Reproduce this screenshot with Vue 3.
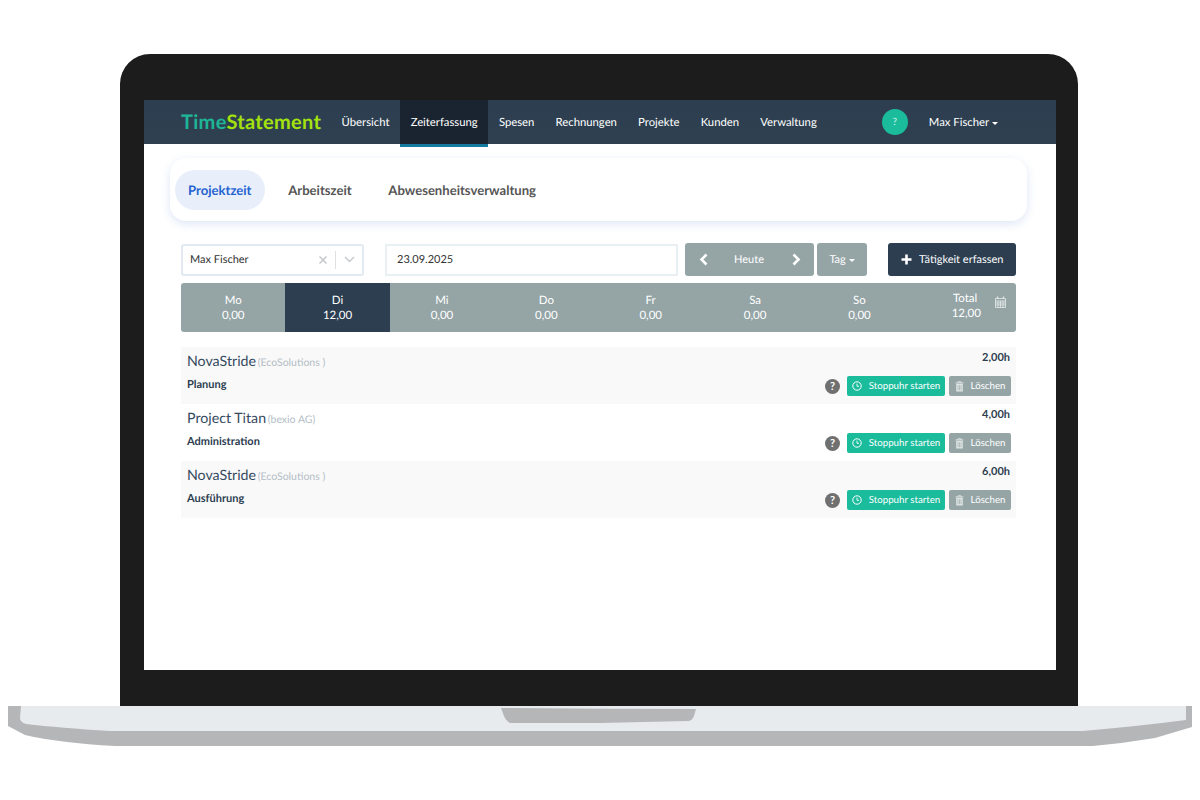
<script setup>
const nav = ['Übersicht', 'Zeiterfassung', 'Spesen', 'Rechnungen', 'Projekte', 'Kunden', 'Verwaltung']
const tabs = ['Projektzeit', 'Arbeitszeit', 'Abwesenheitsverwaltung']
const days = [
  { d: 'Mo', v: '0,00' },
  { d: 'Di', v: '12,00', active: true },
  { d: 'Mi', v: '0,00' },
  { d: 'Do', v: '0,00' },
  { d: 'Fr', v: '0,00' },
  { d: 'Sa', v: '0,00' },
  { d: 'So', v: '0,00' }
]
const rows = [
  { title: 'NovaStride', client: '(EcoSolutions )', task: 'Planung', hours: '2,00h' },
  { title: 'Project Titan', client: '(bexio AG)', task: 'Administration', hours: '4,00h' },
  { title: 'NovaStride', client: '(EcoSolutions )', task: 'Ausführung', hours: '6,00h' }
]
</script>

<template>
  <div class="page">
    <div class="lid">
      <div class="screen">
        <header class="navbar">
          <div class="logo"><span class="logo-a">Time</span><span class="logo-b">Statement</span></div>
          <nav class="nav">
            <a v-for="(n, i) in nav" :key="n" class="nav-item" :class="{ active: i === 1 }">{{ n }}</a>
          </nav>
          <div class="help">?</div>
          <div class="user">Max Fischer <span class="caret"></span></div>
        </header>

        <div class="tabs">
          <div v-for="(t, i) in tabs" :key="t" class="tab" :class="{ on: i === 0 }">{{ t }}</div>
        </div>

        <div class="content">
          <div class="toolbar">
            <div class="select">
              <span class="select-val">Max Fischer</span>
              <svg class="sel-x" width="10" height="10" viewBox="0 0 10 10"><path d="M1.5 1.5l7 7M8.5 1.5l-7 7" stroke="#c4c8cc" stroke-width="1.5" fill="none"/></svg>
              <span class="sel-sep"></span>
              <svg class="sel-d" width="11" height="7" viewBox="0 0 11 7"><path d="M1 1l4.5 4.5L10 1" stroke="#c4c8cc" stroke-width="1.4" fill="none"/></svg>
            </div>
            <div class="date">23.09.2025</div>
            <div class="group">
              <svg width="10" height="13" viewBox="0 0 10 13"><path d="M7.5 1.5L2.5 6.5l5 5" stroke="#fff" stroke-width="2.6" fill="none"/></svg>
              <span class="today">Heute</span>
              <svg width="10" height="13" viewBox="0 0 10 13"><path d="M2.5 1.5l5 5-5 5" stroke="#fff" stroke-width="2.6" fill="none"/></svg>
            </div>
            <div class="tag">Tag <span class="caret small"></span></div>
            <div class="add">
              <svg width="11" height="11" viewBox="0 0 11 11"><path d="M5.5 0.5v10M0.5 5.5h10" stroke="#fff" stroke-width="2.6" fill="none"/></svg>
              <span>Tätigkeit erfassen</span>
            </div>
          </div>

          <div class="week">
            <div v-for="d in days" :key="d.d" class="day" :class="{ active: d.active }">
              <div>{{ d.d }}</div>
              <div>{{ d.v }}</div>
            </div>
            <div class="day total">
              <div class="total-text">
                <div>Total</div>
                <div>12,00</div>
              </div>
              <svg class="cal" width="11" height="12" viewBox="0 0 11 12">
                <path d="M0.5 2.5h10v9h-10zM0.5 5h10M0.5 7h10M0.5 9h10M3 5v6.5M5.5 5v6.5M8 5v6.5" stroke="#dfe4e4" stroke-width="0.9" fill="none"/>
                <path d="M2.5 0.5v2.5M8.5 0.5v2.5" stroke="#dfe4e4" stroke-width="1.4" fill="none"/>
              </svg>
            </div>
          </div>

          <div class="rows">
            <div v-for="(r, i) in rows" :key="i" class="row" :class="{ odd: i % 2 === 0 }">
              <div class="row-left">
                <div class="row-title">{{ r.title }} <span class="client">{{ r.client }}</span></div>
                <div class="task">{{ r.task }}</div>
              </div>
              <div class="row-right">
                <div class="hours">{{ r.hours }}</div>
                <div class="actions">
                  <div class="q">?</div>
                  <div class="btn start">
                    <svg width="10" height="10" viewBox="0 0 10 10"><circle cx="5" cy="5" r="4.2" stroke="#fff" stroke-width="1" fill="none"/><path d="M5 2.6V5.3H7" stroke="#fff" stroke-width="0.9" fill="none"/></svg>
                    <span>Stoppuhr starten</span>
                  </div>
                  <div class="btn del">
                    <svg width="9" height="11" viewBox="0 0 9 11"><path d="M0.5 2h8M3 2V0.8h3V2" stroke="#dfe4e4" stroke-width="1" fill="none"/><path d="M1.2 3h6.6v7.5H1.2z" fill="#dfe4e4"/><path d="M3 4.2v5M4.5 4.2v5M6 4.2v5" stroke="#99a5a5" stroke-width="0.6"/></svg>
                    <span>Löschen</span>
                  </div>
                </div>
              </div>
            </div>
          </div>
        </div>
      </div>
    </div>
    <svg class="base" width="1200" height="41" viewBox="0 0 1200 41">
      <path d="M8 0H1192V21L1155 32Q1125 37 1093 40H115Q60 37 25 29L8 20Z" fill="#b4b6b8"/>
      <path d="M21 0H1186V14Q1140 20 1083 25H110Q60 22 26 18Q20 16 20 12Z" fill="#e8ebee"/>
      <path d="M501 2Q600 3 696 3L694 10Q692 15 688 15L600 17H510Q506 15 504 10Z" fill="#b4b6b8"/>
    </svg>
  </div>
</template>

<style>
html, body { margin: 0; background: #fff; }
</style>

<style scoped>
.page {
  width: 1200px;
  height: 800px;
  padding-top: 54px;
  box-sizing: border-box;
  display: flex;
  flex-direction: column;
  align-items: center;
  overflow: hidden;
  font-family: Lato, "Open Sans", sans-serif;
  color: #2c3e50;
  text-rendering: geometricPrecision;
}
.lid {
  width: 958px;
  height: 652px;
  margin-left: -2px;
  box-sizing: border-box;
  padding: 46px 22px 36px 24px;
  background: #1c1c1c;
  border-radius: 30px 30px 0 0;
  flex: none;
}
.screen {
  height: 570px;
  background: #fff;
}
.navbar {
  height: 44px;
  background: linear-gradient(#2c3e50, #2f4050);
  display: flex;
  align-items: flex-start;
  color: #fff;
}
.logo {
  width: 187px;
  padding-left: 37px;
  box-sizing: border-box;
  font-size: 20px;
  font-weight: 700;
  line-height: 44px;
  letter-spacing: 0.3px;
  flex: none;
  white-space: nowrap;
}
.logo-a { color: #1fb597; }
.logo-b { color: #a4e20e; }
.nav { display: flex; }
.nav-item {
  padding: 0 10.6px;
  font-size: 11.3px;
  line-height: 45px;
  height: 44px;
  color: #fff;
  white-space: nowrap;
}
.nav-item.active {
  background: #1a2430;
  box-shadow: 0 3px 0 #16799f;
}
.help {
  width: 26px;
  height: 26px;
  margin: 9px 0 0 54.5px;
  border-radius: 50%;
  background: #1abc9c;
  color: #d8f5ee;
  font-size: 10px;
  line-height: 26px;
  text-align: center;
  flex: none;
}
.user {
  margin-left: 21px;
  font-size: 11.3px;
  line-height: 45px;
  white-space: nowrap;
}
.caret {
  display: inline-block;
  width: 0;
  height: 0;
  margin-left: 0;
  vertical-align: middle;
  border-top: 3px solid #fff;
  border-left: 3px solid transparent;
  border-right: 3px solid transparent;
}
.tabs {
  margin: 14px 29px 0 26px;
  height: 63px;
  box-sizing: border-box;
  background: #fff;
  border-radius: 16px;
  box-shadow: 0 3px 10px rgba(90, 130, 210, 0.2);
  padding: 12px 5px;
  display: flex;
  gap: 10.7px;
}
.tab {
  padding: 0 13px;
  height: 40px;
  line-height: 40px;
  border-radius: 20px;
  font-size: 13.1px;
  font-weight: 700;
  color: #555;
  white-space: nowrap;
}
.tab.on {
  background: #e8effa;
  color: #2563d0;
}
.content {
  margin: 22px 40px 0 37px;
}
.toolbar {
  display: flex;
  align-items: center;
  height: 33px;
}
.select {
  width: 183px;
  height: 32px;
  box-sizing: border-box;
  border: 2px solid #e3e9f0;
  border-radius: 3px;
  display: flex;
  align-items: center;
  padding: 0 5px 0 7px;
  font-size: 11px;
  color: #333;
  flex: none;
}
.select-val { flex: 1; padding-bottom: 1px; }
.sel-x { margin-right: 7px; }
.sel-sep { width: 1px; height: 18px; background: #dde1e4; margin-right: 8px; }
.sel-d { margin-right: 2px; }
.date {
  width: 293px;
  height: 32px;
  box-sizing: border-box;
  margin-left: 21px;
  border: 2px solid #e8f0f3;
  padding-left: 10px;
  font-size: 11px;
  line-height: 27px;
  color: #333;
  flex: none;
}
.group {
  width: 129px;
  height: 33px;
  margin-left: 7px;
  box-sizing: border-box;
  padding: 0 13px 0 14px;
  background: #95a5a6;
  border-radius: 3px;
  display: flex;
  align-items: center;
  justify-content: space-between;
  color: #fff;
  font-size: 11px;
  flex: none;
}
.today { margin-right: 2px; }
.tag {
  width: 50px;
  height: 33px;
  margin-left: 3px;
  background: #95a5a6;
  border-radius: 3px;
  color: #fff;
  font-size: 11px;
  line-height: 33px;
  text-align: center;
  flex: none;
}
.add {
  width: 128px;
  height: 33px;
  margin-left: 21px;
  padding-left: 13px;
  box-sizing: border-box;
  background: #2c3e50;
  border-radius: 3px;
  color: #fff;
  font-size: 11px;
  display: flex;
  align-items: center;
  gap: 7px;
  flex: none;
}
.week {
  margin-top: 7px;
  height: 49px;
  background: #95a5a6;
  border-radius: 3px;
  display: grid;
  grid-template-columns: repeat(8, 1fr);
  color: #fff;
  overflow: hidden;
}
.day {
  text-align: center;
  font-size: 11.5px;
  line-height: 15px;
  padding-top: 10px;
}
.day.active { background: #2c3e50; }
.day.total {
  display: flex;
  padding-top: 8px;
  padding-left: 40px;
}
.total-text { width: 27px; margin-right: 16px; flex: none; }
.cal { margin-top: 5px; flex: none; }
.rows { margin-top: 15px; }
.row {
  height: 57px;
  box-sizing: border-box;
  padding: 6px 5px 0 6px;
  display: flex;
  justify-content: space-between;
}
.row.odd { background: #f9f9f9; }
.row-title {
  font-size: 14.2px;
  line-height: 18px;
  color: #34495e;
  white-space: nowrap;
}
.client {
  margin-left: -2px;
  font-size: 10.5px;
  color: #b4bec6;
}
.task {
  margin-top: 6px;
  font-size: 11px;
  font-weight: 700;
  line-height: 14px;
  color: #2c3e50;
}
.row-right {
  display: flex;
  flex-direction: column;
  align-items: flex-end;
  margin-top: -2px;
}
.hours {
  font-size: 11px;
  font-weight: 700;
  line-height: 13px;
  margin-right: 1px;
  color: #2c3e50;
}
.actions {
  margin-top: 12px;
  display: flex;
  align-items: center;
  gap: 4px;
}
.q {
  width: 15px;
  height: 15px;
  margin-right: 3px;
  margin-top: 1px;
  border-radius: 50%;
  background: #707070;
  color: #fff;
  font-size: 11px;
  font-weight: 700;
  line-height: 15px;
  text-align: center;
}
.btn {
  height: 20px;
  border-radius: 2px;
  color: #fff;
  font-size: 9.7px;
  display: flex;
  align-items: center;
  justify-content: center;
  box-sizing: border-box;
  white-space: nowrap;
}
.btn.start { width: 98px; background: #1abc9c; gap: 7px; }
.btn.del { width: 62px; background: #95a5a6; gap: 7px; }
.base { flex: none; display: block; }
</style>
